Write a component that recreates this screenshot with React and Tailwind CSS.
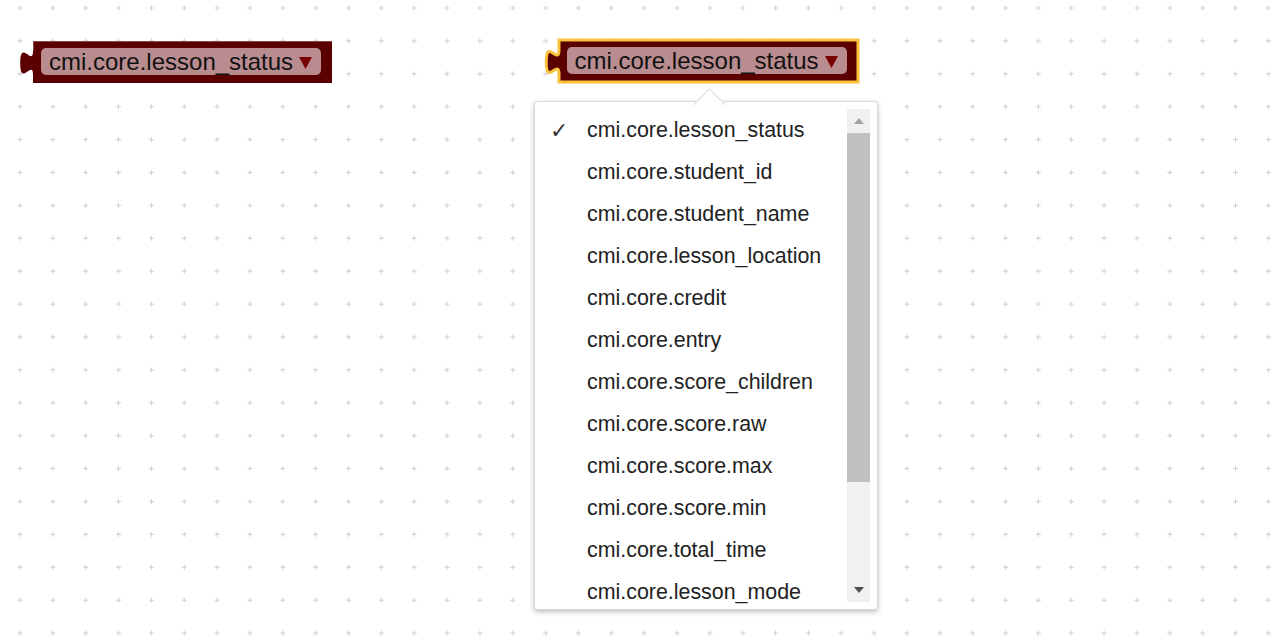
import React from 'react';

const items = [
  'cmi.core.lesson_status',
  'cmi.core.student_id',
  'cmi.core.student_name',
  'cmi.core.lesson_location',
  'cmi.core.credit',
  'cmi.core.entry',
  'cmi.core.score_children',
  'cmi.core.score.raw',
  'cmi.core.score.max',
  'cmi.core.score.min',
  'cmi.core.total_time',
  'cmi.core.lesson_mode',
];

const font = { fontFamily: '"Liberation Sans", Arial, sans-serif' };

// workspace grid of small plus marks
const Grid = () => (
  <svg className="absolute inset-0 h-full w-full" aria-hidden="true">
    <defs>
      <pattern id="grid" width="32.85" height="32.9" patternUnits="userSpaceOnUse" x="3.6" y="-8.45">
        <path d="M13.9 16.45h5M16.4 13.95v5" stroke="#cfcfcf" strokeWidth="1" />
      </pattern>
    </defs>
    <rect width="100%" height="100%" fill="url(#grid)" />
  </svg>
);

const BlockShape = ({ selected }) => (
  <svg className="absolute left-[-16px] top-[-3px] overflow-visible" width="320" height="48" aria-hidden="true">
    <g transform="translate(16 3)">
      <path
        d="M0,0 H299 V42 H0 V34 c0,-16 -12.8,12.8 -12.8,-12 s12.8,4 12.8,-12 Z"
        fill="#5a0000"
        stroke={selected ? '#f9c23c' : 'none'}
        strokeWidth={selected ? 3 : 0}
      />
      {!selected && <path d="M0.5,9.5 V0.5 H298.5" fill="none" stroke="#8c4a4a" strokeWidth="1" />}
    </g>
  </svg>
);

const Block = ({ className, selected }) => (
  <div className={`absolute h-[42px] w-[299px] ${className}`}>
    <BlockShape selected={selected} />
    <div
      className="relative ml-[8px] mt-[7px] flex h-[27px] w-[280px] items-center rounded-[5px] bg-[#b98c8f] pl-[8px] text-[24px] leading-none text-[#111]"
      style={font}
    >
      <span>cmi.core.lesson_status</span>
      <svg className="ml-[6px] mt-[2px]" width="13" height="12" viewBox="0 0 13 12" aria-hidden="true">
        <path d="M0 0 H13 L6.5 12 Z" fill="#780000" />
      </svg>
    </div>
  </div>
);

const Dropdown = () => (
  <div className="absolute left-[534px] top-[101px] h-[509px] w-[344px]">
    <div className="absolute inset-0 rounded-[3px] border border-[#dadada] bg-white shadow-[0_2px_5px_rgba(0,0,0,0.25)]" />
    <div className="absolute left-[164px] top-[-8px] h-[23px] w-[23px] rotate-45 border-l border-t border-[#dadada] bg-white" />
    <div className="relative h-full overflow-hidden pt-[8px]" style={font}>
      {items.map((item, i) => (
        <div key={item} className="flex h-[42px] items-center text-[21.4px] text-[#222]">
          <span className="w-[53px] pl-[16px] text-[22px] italic text-[#333]" style={{ fontFamily: '"DejaVu Sans", sans-serif' }}>
            {i === 0 ? '✓' : ''}
          </span>
          <span>{item}</span>
        </div>
      ))}
    </div>
    {/* scrollbar */}
    <div className="absolute right-[8px] top-[8px] flex h-[493px] w-[23px] flex-col bg-[#f1f1f1]">
      <div className="flex h-[24px] items-center justify-center">
        <svg width="10" height="6" viewBox="0 0 10 6"><path d="M0 6 L5 0 L10 6Z" fill="#a3a3a3" /></svg>
      </div>
      <div className="h-[349px] bg-[#c1c1c1]" />
      <div className="flex-1" />
      <div className="flex h-[24px] items-center justify-center">
        <svg width="10" height="6" viewBox="0 0 10 6"><path d="M0 0 L10 0 L5 6Z" fill="#505050" /></svg>
      </div>
    </div>
  </div>
);

export default function App() {
  return (
    <div className="relative h-[640px] w-full overflow-hidden bg-white">
      <Grid />
      <Block className="left-[33px] top-[41px]" />
      <Block className="left-[558.5px] top-[40px]" selected />
      <Dropdown />
    </div>
  );
}
